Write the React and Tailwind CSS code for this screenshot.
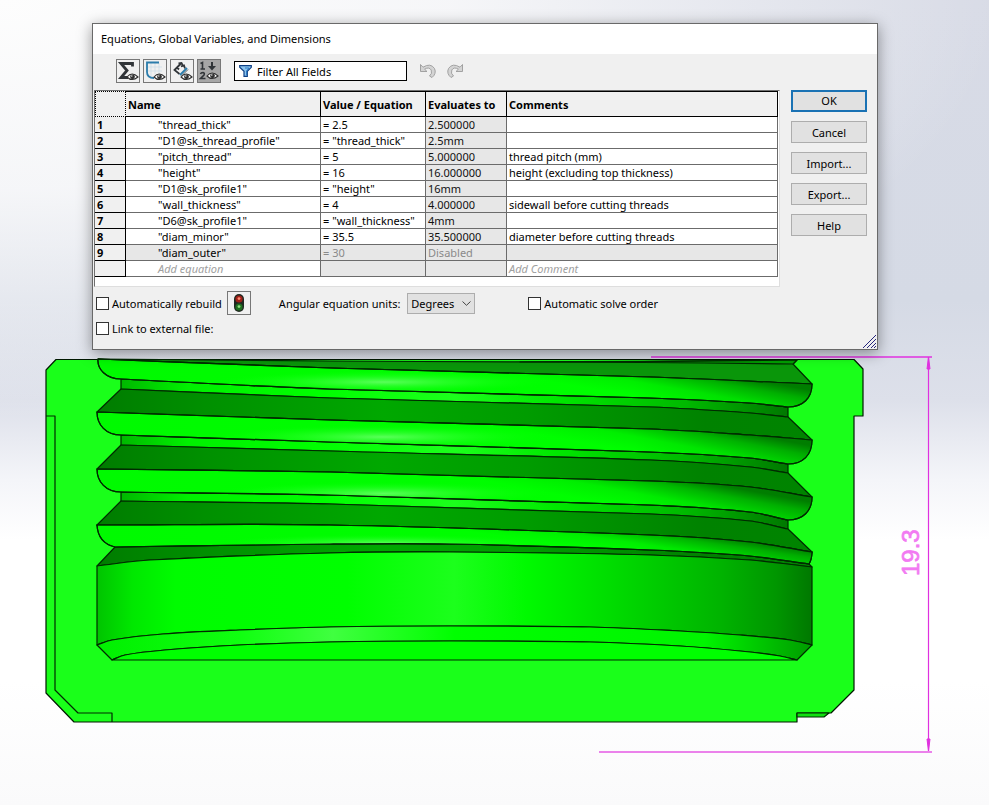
import React from "react";

const rows = [
  { name: '"thread_thick"', value: "= 2.5", result: "2.500000", comment: "" },
  { name: '"D1@sk_thread_profile"', value: '= "thread_thick"', result: "2.5mm", comment: "" },
  { name: '"pitch_thread"', value: "= 5", result: "5.000000", comment: "thread pitch (mm)" },
  { name: '"height"', value: "= 16", result: "16.000000", comment: "height (excluding top thickness)" },
  { name: '"D1@sk_profile1"', value: '= "height"', result: "16mm", comment: "" },
  { name: '"wall_thickness"', value: "= 4", result: "4.000000", comment: "sidewall before cutting threads" },
  { name: '"D6@sk_profile1"', value: '= "wall_thickness"', result: "4mm", comment: "" },
  { name: '"diam_minor"', value: "= 35.5", result: "35.500000", comment: "diameter before cutting threads" },
  { name: '"diam_outer"', value: "= 30", result: "Disabled", comment: "", disabled: true },
];

// smooth curve through a list of points, without the leading move
const curve = (pts) => {
  let d = "";
  for (let i = 0; i < pts.length - 1; i++) {
    const p0 = pts[i - 1] || pts[i];
    const p1 = pts[i];
    const p2 = pts[i + 1];
    const p3 = pts[i + 2] || p2;
    const k = (p2[0] - p1[0]) / 3;
    const m1 = (p2[1] - p0[1]) / (p2[0] - p0[0]);
    const m2 = (p3[1] - p1[1]) / (p3[0] - p1[0]);
    d += ` C${p1[0] + k},${p1[1] + k * m1} ${p2[0] - k},${p2[1] - k * m2} ${p2[0]},${p2[1]}`;
  }
  return d;
};

const line = (pts) => `M${pts[0][0]},${pts[0][1]}${curve(pts)}`;
const back = (pts) => curve([...pts].reverse());

// area between an upper and a lower edge
const band = (top, bottom) => {
  const end = bottom[bottom.length - 1];
  return `${line(top)} L${end[0]},${end[1]} ${back(bottom)} Z`;
};

const crest = [
  [[98, 359], [330, 368], [650, 377], [812, 384]],
  [[97, 412], [330, 420], [650, 429], [750, 435], [812, 440]],
  [[97, 469], [330, 472], [650, 481], [750, 487], [812, 497]],
  [[97, 525], [330, 525], [650, 535], [750, 542], [812, 552]],
];
const flank = [
  [[121, 379], [330, 389], [650, 398], [750, 403], [788, 407]],
  [[121, 435], [330, 442], [650, 452], [750, 458], [788, 464]],
  [[121, 492], [330, 495], [650, 505], [750, 512], [788, 520]],
];
const valley = [
  [[121, 389], [330, 398], [650, 407], [750, 413], [788, 417]],
  [[121, 445], [330, 451], [650, 460], [750, 467], [788, 473]],
  [[121, 501], [330, 504], [650, 514], [750, 521], [788, 529]],
];
const runout = [[115, 547], [330, 544], [450, 544], [650, 550], [750, 556], [809, 564]];
const boreTop = [[97, 566], [150, 560], [330, 553], [450, 552], [650, 555], [750, 560], [812, 567]];
const boreEnd = [[97, 645], [112, 640], [163, 634], [240, 630], [330, 627], [450, 626], [590, 627], [680, 631], [740, 635], [790, 640], [812, 645]];
const floor = [[112, 660], [125, 655], [165, 650], [240, 645], [330, 642], [450, 641], [590, 642], [680, 646], [740, 651], [780, 656], [797, 660]];

const lastCrest = `${line(crest[3])} Q812,559 809,564 ${back(runout)} Q98,543 97,525 Z`;

const ModelView = () => (
  <svg
    className="absolute inset-0 h-full w-full"
    viewBox="0 0 989 805"
    preserveAspectRatio="xMinYMin meet"
    aria-label="Section view of the threaded cap"
  >
    <defs>
      <linearGradient id="crest-fill">
        <stop offset="0" stopColor="#00fa00" />
        <stop offset="0.75" stopColor="#00ff00" />
        <stop offset="1" stopColor="#00e000" />
      </linearGradient>
      <radialGradient id="shine-fill" cx="0.4" cy="0.48" r="0.24">
        <stop offset="0" stopColor="#5aff5a" />
        <stop offset="1" stopColor="#00ff00" stopOpacity="0" />
      </radialGradient>
      <linearGradient id="shade-fill" x1="0.74" y1="0.75" x2="1" y2="0.65">
        <stop offset="0" stopColor="#007800" stopOpacity="0" />
        <stop offset="0.4" stopColor="#007800" stopOpacity="0.12" />
        <stop offset="0.75" stopColor="#007800" stopOpacity="0.5" />
        <stop offset="1.0" stopColor="#007800" stopOpacity="0.95" />
      </linearGradient>
      <linearGradient id="flank-fill">
        <stop offset="0" stopColor="#007c00" />
        <stop offset="0.15" stopColor="#009000" />
        <stop offset="0.4" stopColor="#00a800" />
        <stop offset="0.6" stopColor="#009c00" />
        <stop offset="0.85" stopColor="#008200" />
        <stop offset="1" stopColor="#008400" />
      </linearGradient>
      <linearGradient id="valley-fill">
        <stop offset="0" stopColor="#00b800" />
        <stop offset="0.1" stopColor="#00f000" />
        <stop offset="0.3" stopColor="#00ff00" />
        <stop offset="0.5" stopColor="#1cff1c" />
        <stop offset="0.65" stopColor="#00e800" />
        <stop offset="0.85" stopColor="#00b800" />
        <stop offset="1" stopColor="#007800" />
      </linearGradient>
      <linearGradient id="bore-fill">
        <stop offset="0" stopColor="#00c400" />
        <stop offset="0.05" stopColor="#00e800" />
        <stop offset="0.11" stopColor="#00fc00" />
        <stop offset="0.35" stopColor="#00ff00" />
        <stop offset="0.5" stopColor="#1cff1c" />
        <stop offset="0.6" stopColor="#00fa00" />
        <stop offset="0.72" stopColor="#00dc00" />
        <stop offset="0.87" stopColor="#00b400" />
        <stop offset="0.95" stopColor="#009600" />
        <stop offset="1" stopColor="#007800" />
      </linearGradient>
      <linearGradient id="chamfer-fill">
        <stop offset="0" stopColor="#00f000" />
        <stop offset="0.2" stopColor="#10ff10" />
        <stop offset="0.33" stopColor="#40ff40" />
        <stop offset="0.5" stopColor="#00ff00" />
        <stop offset="0.85" stopColor="#00f400" />
        <stop offset="1" stopColor="#009c00" />
      </linearGradient>
    </defs>

    <g stroke="#002a00" strokeWidth="1.2" strokeLinejoin="round">
      <path
        fill="#1aff1a"
        stroke="#001800"
        d="M56,359.5 H98 L797,359.5 H854 L863,369 V416 H854 V690 L831,713 H797 V722 H74 L46,693 V370 Z"
      />
      <path fill="none" d="M46,416 H55 V690 L78,713 H112 V722" />
      <path fill="#10e010" d="M797,713 H829 L824,717 H797 Z" />

      {/* mouth of the bore */}
      <path fill="#0a960a" d="M98,359 L330,361 Q560,363 797,360 L793,364 L812,384 L650,377 L330,368 Z" />
      <path fill="#00a000" d="M520,362 Q660,362 797,360 L793,364 Q660,362 520,362 Z" />

      <path fill="url(#flank-fill)" d={band(crest[3], runout)} />
      {flank.map((lower, i) => {
        const upper = crest[i];
        const [x, y] = upper[0];
        const y0 = lower[0][1];
        const y1 = lower[lower.length - 1][1];
        const shape = `${line(upper)} C812,${y1 - 9} 803,${y1} 788,${y1} ${back(lower)} C106,${y0} 97,${y0 - 10} ${x},${y} Z`;
        return (
          <g key={y}>
            <path fill="url(#valley-fill)" d={band(lower, valley[i])} />
            <path fill="url(#flank-fill)" d={band(valley[i], crest[i + 1])} />
            <path fill="url(#crest-fill)" d={shape} />
            <path fill="url(#shine-fill)" stroke="none" d={shape} />
            <path fill="url(#shade-fill)" d={shape} />
          </g>
        );
      })}

      <path fill="url(#flank-fill)" d={band(runout, boreTop)} />
      <path fill="url(#crest-fill)" d={lastCrest} />
      <path fill="url(#shine-fill)" stroke="none" d={lastCrest} />
      <path fill="url(#shade-fill)" d={lastCrest} />
      <path fill="url(#bore-fill)" d={band(boreTop, boreEnd)} />
      <path fill="url(#chamfer-fill)" d={band(boreEnd, floor)} />
      <path fill="#00ff00" d={`${line(floor)} Z`} />
    </g>

    <g stroke="#e030e0" fill="#e030e0" strokeWidth="1">
      <path d="M651,357 H932" strokeWidth="2" strokeOpacity="0.75" />
      <path d="M599,752 H932" strokeWidth="2" strokeOpacity="0.6" />
      <path d="M928.5,357 V751" strokeWidth="1.2" />
      <path d="M928.5,357 L930,369 H927 Z M928.5,751 L930,739 H927 Z" />
    </g>
    <text
      x="0"
      y="0"
      transform="translate(919 576) rotate(-90)"
      strokeWidth="0.7"
      className="fill-[#f27af2] stroke-[#f27af2] font-['Liberation_Sans',sans-serif] text-[24px]"
    >
      19.3
    </text>
  </svg>
);

const Eye = ({ x = 10, y = 13 }) => (
  <g transform={`translate(${x} ${y})`}>
    <path d="M0,4 Q5,-2 11,4 Q5,9 0,4 Z" fill="#fff" stroke="#303030" strokeWidth="1.1" />
    <circle cx="5.5" cy="3.8" r="2.4" fill="#303030" />
    <circle cx="4.8" cy="3" r="0.7" fill="#fff" />
  </g>
);

const SigmaIcon = () => (
  <svg className="size-full" viewBox="0 0 22 22">
    <path d="M15.5,6.5 V3.5 H4 L10,10.5 L4,17.5 H11" fill="none" stroke="#303438" strokeWidth="2.8" />
    <Eye />
  </svg>
);

const SketchIcon = () => (
  <svg className="size-full" viewBox="0 0 22 22">
    <path d="M7,3 V16 M11,3 V14 M15,3 V14 M4,7 H18 M4,11 H18" stroke="#c9dbe6" strokeWidth="0.7" />
    <path d="M15,2.5 H3 V12 Q3,18 10,18" fill="none" stroke="#2b7cab" strokeWidth="1.8" />
    <Eye />
  </svg>
);

const DimensionIcon = () => (
  <svg className="size-full" viewBox="0 0 22 22">
    <path
      d="M8.5,14 L3.5,10 L9.5,4 M7.5,3.5 L10.5,3 L12,6 M10,6.5 L13,5.5 L14,8.5 M6,7.5 L8,9.5"
      fill="none"
      stroke="#303438"
      strokeWidth="1.8"
    />
    <path d="M9,15 L16,8" stroke="#2b7cab" strokeWidth="2" />
    <path d="M10.5,16 L17,9.5" stroke="#303438" strokeWidth="0.8" />
    <Eye />
  </svg>
);

const OrderIcon = () => (
  <svg className="size-full" viewBox="0 0 22 22">
    <path
      d="M2.5,3.5 L4.5,2.5 V9 M2.5,9 H7 M2.5,14 Q3,12.5 5,12.5 Q7,13 6,15 L2.5,18.5 H7.5"
      fill="none"
      stroke="#303438"
      strokeWidth="1.6"
    />
    <path d="M14,2 V8" stroke="#303438" strokeWidth="2" />
    <path d="M10,6 H18 L14,10.5 Z" fill="#303438" />
    <Eye x={9} y={12} />
  </svg>
);

const UndoIcon = ({ redo }) => (
  <svg className={redo ? "size-4 -scale-x-100" : "size-4"} viewBox="0 0 16 16">
    <path
      d="M0.5,1.5 V8.5 H7 L4.6,6.2 Q9,3.5 11.2,7 Q12.6,10.5 9.5,13 L12,14.5 Q16.8,10.5 14.5,5.5 Q10.5,-0.5 3,4.2 Z"
      fill="#d4d4d4"
      stroke="#9b9b9b"
      strokeWidth="0.9"
    />
  </svg>
);

const filters = [
  { label: "Equation View", Icon: SigmaIcon },
  { label: "Sketch Equation View", Icon: SketchIcon },
  { label: "Dimension View", Icon: DimensionIcon },
  { label: "Ordered View", Icon: OrderIcon, active: true },
];

const CheckBox = ({ label }) => (
  <label className="flex items-center gap-[3px] whitespace-nowrap">
    <input type="checkbox" className="size-[13px] appearance-none border border-[#333] bg-white checked:bg-[#333]" />
    {label}
  </label>
);

const EquationTable = () => (
  <div className="min-w-0 flex-1 border border-t-[#6f6f6f] border-r-[#dedede] border-b-[#dedede] border-l-[#6f6f6f] bg-white pr-px pb-[9px]">
    <table className="w-full table-fixed border-separate border-spacing-0 text-left whitespace-nowrap">
      <colgroup>
        <col className="w-[31px]" />
        <col className="w-[195px]" />
        <col className="w-[105px]" />
        <col className="w-[81px]" />
        <col />
      </colgroup>
      <thead>
        <tr className="h-[26px] bg-[#f0f0f0]">
          <th className="border border-dotted border-black p-0" />
          {["Name", "Value / Equation", "Evaluates to", "Comments"].map((title) => (
            <th key={title} className="border-t border-r border-b border-black py-0 pr-0 pl-0.5 font-bold">
              {title}
            </th>
          ))}
        </tr>
      </thead>
      <tbody>
        {rows.map((row, i) => (
          <tr key={row.name} className={row.disabled ? "h-4 bg-[#e7e7e7]" : "h-4"}>
            <th className="border-r border-b border-black bg-[#f0f0f0] py-0 pr-0 pl-0.5 font-bold">{i + 1}</th>
            <td className="border-r border-b border-[#6b6b6b] py-0 pr-0 pl-8">{row.name}</td>
            <td className={`border-r border-b border-[#6b6b6b] py-0 pr-0 pl-0.5 ${row.disabled ? "text-[#8a8a8a]" : ""}`}>
              {row.value}
            </td>
            <td
              className={`border-r border-b border-[#6b6b6b] bg-[#e7e7e7] py-0 pr-0 pl-0.5 ${
                row.disabled ? "text-[#8a8a8a]" : "text-[#111]"
              }`}
            >
              {row.result}
            </td>
            <td className="border-r border-b border-[#6b6b6b] py-0 pr-0 pl-0.5">{row.comment}</td>
          </tr>
        ))}
        <tr className="h-4 text-[#a0a0a0] italic">
          <th className="border-r border-b border-black bg-[#f0f0f0] p-0" />
          <td className="border-r border-b border-[#6b6b6b] py-0 pr-0 pl-8">Add equation</td>
          <td className="border-r border-b border-[#6b6b6b] bg-[#e7e7e7] p-0" />
          <td className="border-r border-b border-[#6b6b6b] bg-[#e7e7e7] p-0" />
          <td className="border-r border-b border-[#6b6b6b] py-0 pr-0 pl-0.5">Add Comment</td>
        </tr>
      </tbody>
    </table>
  </div>
);

const EquationsDialog = () => (
  <section className="relative mr-[111px] ml-[92px] border border-[#696969] bg-[#f0f0f0] shadow-[0_3px_14px_rgba(0,0,0,0.4)]">
    <h1 className="bg-white px-2 leading-[30px]">Equations, Global Variables, and Dimensions</h1>

    <div className="flex h-9 items-center pb-0.5 pl-[23px]">
      <div className="flex gap-[3px]">
        {filters.map(({ label, Icon, active }) => (
          <button
            key={label}
            type="button"
            aria-label={label}
            className={`size-6 border border-[#777] ${active ? "bg-[#a6a6a6]" : "bg-[#f0f0f0]"}`}
          >
            <Icon />
          </button>
        ))}
      </div>
      <label className="ml-[13px] flex h-5 w-[173px] items-center border border-black bg-white pl-1">
        <svg className="h-3 w-[13px] shrink-0" viewBox="0 0 13 12">
          <path d="M0.7,0.7 H12.3 V2.3 L8.3,6.3 V11.3 H5 V6.3 L0.7,2.3 Z" fill="#8cc4ee" stroke="#0d3f85" strokeWidth="1.2" />
          <path d="M6,3 H10 L7.5,6 V10" fill="none" stroke="#2c7ac4" />
        </svg>
        <input type="text" aria-label="Filter" defaultValue="Filter All Fields" className="ml-[5px] w-full min-w-0 outline-none" />
      </label>
      <button type="button" aria-label="Undo" className="ml-[13px]">
        <UndoIcon />
      </button>
      <button type="button" aria-label="Redo" className="ml-[11px]">
        <UndoIcon redo />
      </button>
    </div>

    <div className="flex gap-[11px] pr-[10px] pl-px">
      <EquationTable />
      <div className="flex w-[76px] flex-col gap-[9px]">
        <button type="button" className="h-[22px] border-2 border-[#1a72b4] bg-[#e1e1e1] leading-4">
          OK
        </button>
        {["Cancel", "Import...", "Export...", "Help"].map((label) => (
          <button key={label} type="button" className="h-[22px] border border-[#adadad] bg-[#e1e1e1]">
            {label}
          </button>
        ))}
      </div>
    </div>

    <div className="mt-1 flex h-6 items-center pl-[3px]">
      <CheckBox label="Automatically rebuild" />
      <button type="button" aria-label="Rebuild" className="ml-[5px] flex size-6 items-center justify-center border border-[#777]">
        <svg className="h-[18px] w-2.5" viewBox="0 0 10 18">
          <rect width="10" height="18" rx="5" fill="#202820" />
          <circle cx="5" cy="5" r="3.6" fill="#a02018" />
          <circle cx="5" cy="4.6" r="1.4" fill="#ff8a70" />
          <circle cx="5" cy="13" r="3.6" fill="#1f7020" />
          <circle cx="5" cy="12.6" r="1.4" fill="#90e080" />
        </svg>
      </button>
      <label htmlFor="units" className="ml-7 whitespace-nowrap">
        Angular equation units:
      </label>
      <div className="relative ml-[7px]">
        <select id="units" className="h-[21px] w-[68px] appearance-none border border-[#adadad] bg-[#e1e1e1] pl-[3px]">
          <option>Degrees</option>
          <option>Radians</option>
        </select>
        <svg className="pointer-events-none absolute top-2 right-1 h-[5px] w-[9px]" viewBox="0 0 9 5">
          <path d="M0.5,0.5 L4.5,4.3 L8.5,0.5" fill="none" stroke="#444" />
        </svg>
      </div>
      <div className="ml-[53px]">
        <CheckBox label="Automatic solve order" />
      </div>
    </div>

    <div className="flex h-[34px] items-start justify-between pl-[3px]">
      <div className="pt-1.5">
        <CheckBox label="Link to external file:" />
      </div>
      <svg className="size-[15px] self-end" viewBox="0 0 15 15">
        <path d="M1,14 L14,1 M5,14 L14,5 M9,14 L14,9 M12,14 L14,12" stroke="#26267c" strokeWidth="1" />
      </svg>
    </div>
  </section>
);

const App = () => (
  <main className="relative min-h-screen bg-[radial-gradient(ellipse_1000px_420px_at_0_0,#fdfdfd_0%,#fdfdfdcc_45%,transparent_100%),linear-gradient(#d8dbe6_0px,#d5dae5_300px,#dde0ea_400px,#f4f5f9_480px,#ffffff_540px,#ffffff_680px,#fafafb_805px)] pt-[23px] font-['Noto_Sans','Open_Sans',sans-serif] text-[11px] leading-[15px] text-black">
    <ModelView />
    <EquationsDialog />
  </main>
);

export default App;
